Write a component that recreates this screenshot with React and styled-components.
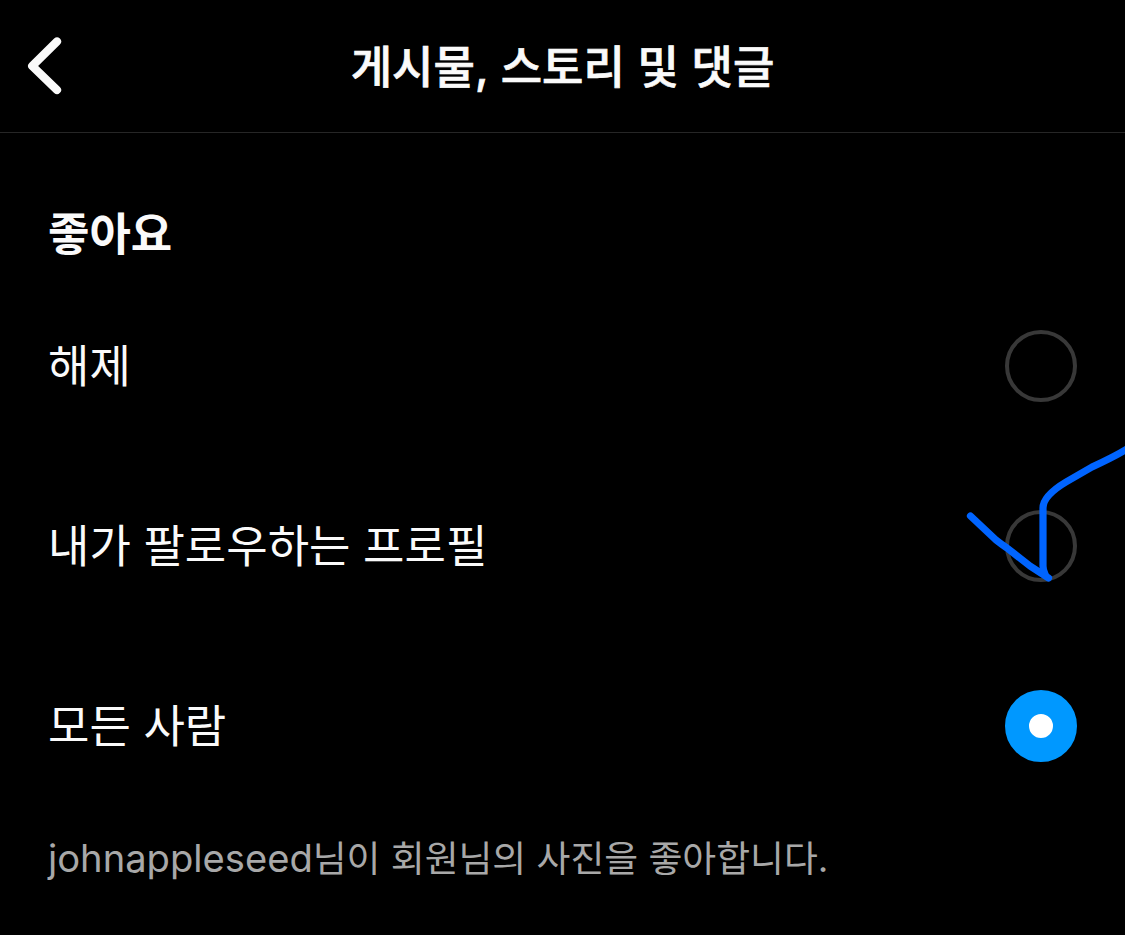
import styled, { createGlobalStyle } from 'styled-components'

const options = [
    { id: 'off', label: '해제' },
    { id: 'following', label: '내가 팔로우하는 프로필', marked: true },
    { id: 'everyone', label: '모든 사람' },
]

const App = () => {
    const selected = 'everyone'
    return <Wrapper>
        <GlobalStyle />
        <Header>
            <BackButton aria-label='뒤로'>
                <svg width='36' height='60' viewBox='0 0 36 60'>
                    <path d='M30 5.500 5.200 30 30 54' />
                </svg>
            </BackButton>
            <Title>게시물, 스토리 및 댓글</Title>
        </Header>
        <Section>
            <SectionTitle>좋아요</SectionTitle>
            {options.map(({ id, label, marked }) => (
                <Option key={id}>
                    <Label>{label}</Label>
                    <Radio $checked={id === selected} />
                    {marked && <Arrow />}
                </Option>
            ))}
            <Hint><Username>johnappleseed</Username>님이 회원님의 사진을 좋아합니다.</Hint>
        </Section>
    </Wrapper>
}

// hand drawn arrow over the radio
const Arrow = () => (
    <ArrowSvg width='165' height='150' viewBox='960 440 165 150'>
        <path d='M1130 447 C1118 455 1105 461 1092 467 L1066 482 C1056 488 1043 498 1043 508 V566 Q1043 570 1045 574' />
        <path d='M970.500 516 L996 540 Q1001 544 1007 548 L1030 566 L1048.500 578' />
    </ArrowSvg>
)

const GlobalStyle = createGlobalStyle`
body{
    margin: 0;
    background: #000;
}
`

const Wrapper = styled.main`
    box-sizing: border-box;
    height: 935px;
    overflow: hidden;
    background: #000;
    color: #fafafa;
    font-family: Inter, 'Noto Sans CJK KR', sans-serif;
`

const Header = styled.header`
    box-sizing: border-box;
    height: 133px;
    display: grid;
    grid-template-columns: 100px 1fr 100px;
    align-items: center;
    border-bottom: 1px solid #262626;
`

const BackButton = styled.button`
    padding: 0 0 0 27px;
    border: 0;
    background: none;
    display: flex;
    svg{
        fill: none;
        stroke: #fafafa;
        stroke-width: 8.2;
        stroke-linecap: round;
        stroke-linejoin: round;
    }
`

const Title = styled.h1`
    margin: 0;
    padding-bottom: 3px;
    font-size: 45px;
    font-weight: 500;
    -webkit-text-stroke: 0.7px #fafafa;
    word-spacing: 0.6px;
    text-align: center;
    white-space: nowrap;
`

const Section = styled.section`
    padding: 57px 48px 0;
`

const SectionTitle = styled.h2`
    margin: 0;
    height: 86px;
    line-height: 89px;
    font-size: 45px;
    font-weight: 700;
`

const Option = styled.div`
    position: relative;
    height: 180px;
    display: flex;
    align-items: center;
    justify-content: space-between;
`

const Label = styled.span`
    padding-bottom: 5px;
    font-size: 45px;
    font-weight: 400;
    white-space: nowrap;
`

const Radio = styled.span`
    box-sizing: border-box;
    width: 72px;
    height: 72px;
    border-radius: 50%;
    border: ${({ $checked }) => ($checked ? '24px solid #0098ff' : '4px solid #383838')};
    background: ${({ $checked }) => ($checked ? '#fff' : 'transparent')};
`

const ArrowSvg = styled.svg`
    position: absolute;
    right: -48px;
    top: -16px;
    fill: none;
    stroke: #0064ff;
    stroke-width: 7.2;
    stroke-linecap: round;
    stroke-linejoin: round;
`

const Hint = styled.p`
    margin: 12px 0 0;
    line-height: 60px;
    font-size: 36.8px;
    color: #a8a8a8;
    white-space: nowrap;
`

const Username = styled.span`
    font-size: 38.15px;
`

export default App
